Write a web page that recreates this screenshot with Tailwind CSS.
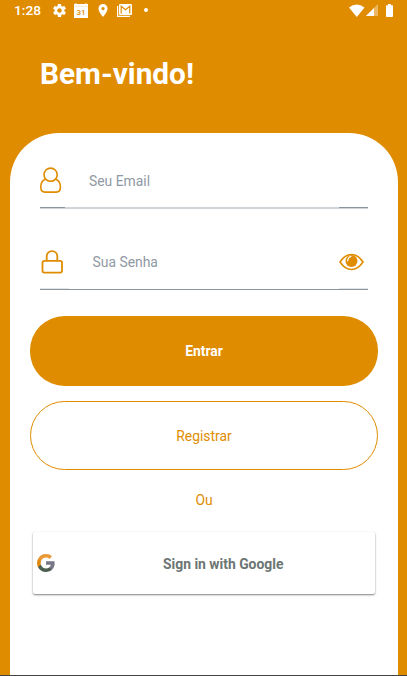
<!DOCTYPE html>
<html lang="pt-BR">
<head>
<meta charset="utf-8">
<title>Bem-vindo</title>
<script src="https://cdn.jsdelivr.net/npm/@tailwindcss/browser@4"></script>
</head>
<body class="bg-[#e08c00]">
<main class="flex h-[676px] w-[407px] flex-col overflow-hidden border-b border-[#444] bg-[#e08c00] font-['Roboto',sans-serif] text-[13.900px] leading-5">
  <header class="flex h-5 items-center pl-[14px] text-white">
    <span class="w-[39px] text-[13.700px] font-medium leading-5">1:28</span>
    <svg class="h-[13px] w-[13px] shrink-0" viewBox="2 2 20 20" fill="currentColor"><path d="M19.43 12.98c.04-.32.07-.64.07-.98s-.03-.66-.07-.98l2.11-1.65c.19-.15.24-.42.12-.64l-2-3.46c-.12-.22-.39-.3-.61-.22l-2.49 1c-.52-.4-1.08-.73-1.69-.98l-.38-2.65A.488.488 0 0 0 14 2h-4c-.25 0-.46.18-.49.42l-.38 2.650c-.61.25-1.170.59-1.690.98l-2.490-1c-.23-.09-.49 0-.61.22l-2 3.460c-.13.22-.07.49.12.64l2.110 1.650c-.04.32-.07.65-.07.98s.03.66.07.98l-2.110 1.650c-.19.15-.24.42-.12.64l2 3.460c.12.22.39.3.61.22l2.490-1c.52.4 1.080.73 1.690.98l.38 2.650c.03.24.24.42.49.42h4c.25 0 .46-.18.49-.42l.38-2.650c.61-.25 1.170-.59 1.690-.98l2.490 1c.23.09.49 0 .61-.22l2-3.460c.12-.22.07-.49-.12-.64l-2.110-1.650zM12 15.500c-1.930 0-3.500-1.570-3.500-3.500s1.570-3.500 3.500-3.500 3.500 1.570 3.500 3.500-1.570 3.500-3.500 3.500z"/></svg>
    <svg class="ml-[8px] h-[15px] w-[14px] shrink-0" viewBox="0 0 14 15"><path fill="#fff" d="M0 1h1.500V0h1v1h9V0h1v1H14v14H0z"/><path stroke="#f6dcae" stroke-width=".6" d="M0 3.600h14"/><text x="7" y="11.900" text-anchor="middle" font-size="8" font-weight="500" fill="#e08c00">31</text></svg>
    <svg class="ml-[10px] h-[13px] w-[10px] shrink-0" viewBox="5 2 14 20" fill="currentColor"><path d="M12 2C8.130 2 5 5.130 5 9c0 5.250 7 13 7 13s7-7.750 7-13c0-3.870-3.130-7-7-7zm0 9.500a2.500 2.500 0 1 1 0-5 2.500 2.500 0 0 1 0 5z"/></svg>
    <svg class="ml-[9px] h-[13px] w-[15px] shrink-0" viewBox="0 0 15 13"><path d="M.6 2v10.400H13" fill="none" stroke="#fff" stroke-width="1.200"/><rect x="2" width="13" height="11" rx="1" fill="#fff"/><path d="M4.200 9.500V2.200l4.300 3.500 4.300-3.500v7.300" fill="none" stroke="#e08c00" stroke-width="1.200"/></svg>
    <span class="ml-[12px] h-1 w-1 rounded-full bg-white"></span>
    <svg class="ml-[201px] h-[13px] w-[16px] shrink-0" viewBox="0 0 16 13"><path fill="#fff" d="M0 3.500Q7.500-2.500 15.500 3.500L7.800 13z"/></svg>
    <svg class="ml-[1px] h-3 w-3 shrink-0" viewBox="0 0 12 12"><path fill="#fff" fill-opacity=".38" d="M0 12 12 0v12z"/><path fill="#fff" d="M0 12 8 4v8z"/></svg>
    <svg class="ml-[8px] h-[13px] w-[7px] shrink-0" viewBox="0 0 7 13"><path fill="#fff" d="M2 0h3v1.300h1.300q.7 0 .7.700v10.300q0 .7-.7.700H.7q-.7 0-.7-.7V2q0-.7.700-.7H2z"/></svg>
  </header>
  <h1 class="mt-[34px] h-[79px] pl-[40px] text-[29.800px] font-bold leading-[40px] text-white">Bem-vindo!</h1>

  <section class="ml-[10px] flex h-[542px] w-[387.5px] flex-col rounded-t-[49px] bg-white px-5">
    <label class="ml-[10px] flex h-[76px] w-[328px] items-end">
      <span class="flex w-full flex-col">
        <span class="flex h-[40px] items-start">
          <svg class="h-[26px] w-[22px] shrink-0" viewBox="0 0 22 26" fill="none" stroke="#e08c00" stroke-width="1.600"><circle cx="10.600" cy="7.700" r="6.600"/><path d="M5.400 12.300C2.200 13.500.8 16.500.8 20.200c0 3.200 1.500 4.900 4.200 4.900h11.200c2.700 0 4.200-1.700 4.200-4.900 0-3.700-1.400-6.700-4.600-7.900"/></svg>
          <span class="ml-[27px] mt-[4px] text-[#8f99a3]">Seu Email</span>
        </span>
        <span class="flex h-px justify-between bg-[#cfd4d9]"><i class="w-[25px] bg-[#8c959e]"></i><i class="w-[29px] bg-[#8c959e]"></i></span>
        <span class="h-px bg-[#cfd4d9]"></span>
      </span>
    </label>
    <label class="ml-[10px] flex h-[81px] w-[328px] flex-col justify-end">
      <span class="flex h-[38px] items-start">
        <svg class="ml-[1px] h-[24px] w-[22px] shrink-0" viewBox="0 0 22 24" fill="none" stroke="#e08c00" stroke-width="1.800"><rect x="1.500" y="10.800" width="19.500" height="11.800" rx="1.800"/><path d="M5.700 11V6.500C5.700 3.200 8 1.200 11 1.200s5.300 2 5.300 5.300V11"/></svg>
        <span class="ml-[29.500px] mt-[2px] text-[#8f99a3]">Sua Senha</span>
        <svg class="ml-auto mr-[4px] mt-[3px] h-[18px] w-[25px]" viewBox="0 0 25 18"><path fill="#fff" stroke="#e08c00" stroke-width="1.600" d="M1 9Q6 1.500 12.500 1.500T24 9Q19 16.500 12.500 16.500T1 9z"/><circle cx="12.500" cy="7.900" r="6" fill="#e08c00"/><path d="M8.700 7.800q.1-3.200 3.300-4.500" fill="none" stroke="#fff" stroke-width="1.200" stroke-linecap="round"/></svg>
      </span>
      <span class="flex h-px justify-between"><i class="w-[29px] bg-[#e3e6e9]"></i><i class="w-[29px] bg-[#e3e6e9]"></i></span>
      <span class="h-px bg-[#8c959e]"></span>
    </label>
    <button class="mt-[26px] h-[69.5px] w-[348px] shrink-0 rounded-[34.500px] bg-[#e08c00] font-bold text-white">Entrar</button>
    <button class="mt-[15px] h-[69.5px] w-[348px] shrink-0 rounded-[34.500px] border border-[#e08c00] pt-[2px] text-[#e08c00]">Registrar</button>
    <p class="mt-[20px] w-[348px] text-center text-[#e08c00]">Ou</p>
    <button class="ml-[3px] mt-[22px] flex h-[62px] w-[341.5px] shrink-0 items-center rounded-[2px] bg-white pl-1 text-[#6c7573] shadow-[0_1px_2px_rgba(0,0,0,0.5)]">
      <svg class="h-[18px] w-[18px]" viewBox="0 0 18 18"><path fill="#777788" d="M17.640 9.200c0-.64-.06-1.250-.16-1.840H9v3.480h4.840a4.140 4.140 0 0 1-1.800 2.720v2.260h2.920c1.700-1.570 2.680-3.880 2.680-6.620z"/><path fill="#4d5f50" d="M9 18c2.430 0 4.470-.8 5.960-2.180l-2.920-2.260c-.8.540-1.840.86-3.040.86-2.340 0-4.330-1.580-5.040-3.710H.96v2.330A9 9 0 0 0 9 18z"/><path fill="#df8b10" d="M3.960 10.710A5.400 5.400 0 0 1 3.680 9c0-.59.1-1.170.28-1.710V4.960H.96A9 9 0 0 0 0 9c0 1.450.35 2.830.96 4.040z"/><path fill="#ea9835" d="M9 3.580c1.320 0 2.500.45 3.440 1.350l2.580-2.590A8.650 8.650 0 0 0 9 0 9 9 0 0 0 .96 4.960l3 2.330C4.670 5.160 6.660 3.580 9 3.580z"/></svg>
      <span class="ml-[108px] pt-[2px] font-bold">Sign in with Google</span>
    </button>
  </section>
</main>
</body>
</html>
